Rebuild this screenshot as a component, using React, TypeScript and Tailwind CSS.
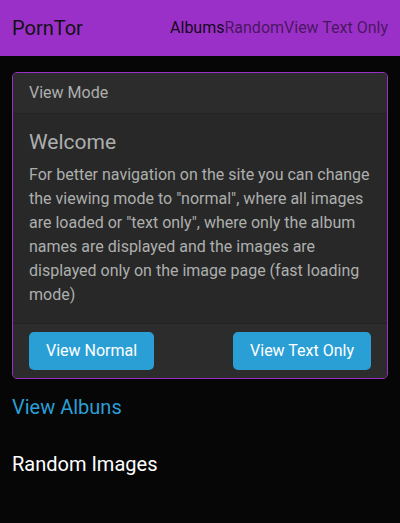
export default function App() {
  const font = { fontFamily: "Roboto, 'Liberation Sans', sans-serif" };
  return (
    <div style={font} className="min-h-[523px] bg-[#060606] text-[#adafae]">
      {/* Navbar */}
      <nav className="flex h-14 items-center justify-between bg-[#9b30c8] px-3">
        <span className="text-[20px] text-[#111]">PornTor</span>
        <div className="flex text-[16px]">
          <a className="text-black/90">Albums</a>
          <a className="text-black/55">Random</a>
          <a className="text-black/55">View Text Only</a>
        </div>
      </nav>

      <main className="px-3 pt-4">
        {/* View mode card */}
        <div className="overflow-hidden rounded-[5px] border border-[#9b30c8] bg-[#282828]">
          <div className="border-b border-[#222] bg-[#2c2c2c] px-4 py-2 text-[16px] leading-6">
            View Mode
          </div>
          <div className="px-4 pt-4 pb-4">
            <h5 className="mb-[8px] text-[21px] leading-[1.2] text-[#adafae]">Welcome</h5>
            <p className="text-[16px] leading-6">
              For better navigation on the site you can change the viewing mode to "normal", where
              all images are loaded or "text only", where only the album names are displayed and
              the images are displayed only on the image page (fast loading mode)
            </p>
          </div>
          <div className="flex justify-between border-t border-[#222] bg-[#2c2c2c] px-4 py-2">
            <button className="h-[38px] rounded-[5px] bg-[#2a9fd6] px-[17px] text-[16px] text-white">
              View Normal
            </button>
            <button className="h-[38px] rounded-[5px] bg-[#2a9fd6] px-[17px] text-[16px] text-white">
              View Text Only
            </button>
          </div>
        </div>

        <a className="mt-4 block text-[20px] leading-6 text-[#2a9fd6]">View Albuns</a>
        <h5 className="mt-[33px] text-[20px] leading-6 text-white">Random Images</h5>
      </main>
    </div>
  );
}
